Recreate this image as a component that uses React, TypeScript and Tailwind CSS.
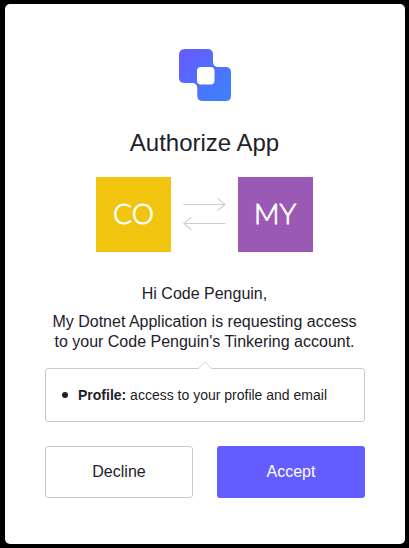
const avatar =
  "flex h-[75px] w-[75px] items-center justify-center pb-1 font-[Lato,sans-serif] text-[28px] font-light leading-none text-white [-webkit-text-stroke:0.8px_#fff]";

function Logo() {
  return (
    <svg className="h-[52px] w-[52px]" viewBox="0 0 52 52" aria-hidden="true">
      <defs>
        <linearGradient id="brand" x1="0" y1="0" x2="1" y2="1">
          <stop offset="0.1" stopColor="#635dff" />
          <stop offset="0.9" stopColor="#3f80ff" />
        </linearGradient>
      </defs>
      <path
        fill="url(#brand)"
        fillRule="evenodd"
        d="M6 0H28.500Q34 0 34 5.500V12.500Q34 18 39.500 18H46.500Q52 18 52 23.500V46.500Q52 52 46.500 52H24Q18.300 52 18.300 46.500V39.500Q18.300 34 13 34H5.500Q0 34 0 28.500V6Q0 0 6 0ZM22 18Q18 18 18 22V31.500Q18 35.500 22 35.500H31.500Q35.500 35.500 35.500 31.500V22Q35.500 18 31.500 18Z"
      />
    </svg>
  );
}

function Arrows() {
  return (
    <svg className="mb-0.5 h-[33px] w-[44px]" viewBox="0 0 44 33" fill="none" stroke="#cdced2" strokeWidth="1.1" aria-hidden="true">
      <path d="M0.300 7.500H42M34.500 1.300L42 7.500L34.500 13.700" />
      <path d="M42.500 26.500H0.800M8.300 20.300L0.800 26.500L8.300 32.700" />
    </svg>
  );
}

export default function App() {
  return (
    <main className="flex h-[548px] w-[409px] bg-black pt-1 pl-[5px] font-['Liberation_Sans',Arial,sans-serif] text-[#1e212a]">
      <section className="flex h-[540px] w-[400px] flex-col items-center rounded-[5px] bg-white px-10 pt-[45px]">
        <Logo />
        <h1 className="mt-[26px] mr-px text-2xl leading-8">Authorize App</h1>
        <div className="mt-[18px] ml-[51px] flex w-[217px] items-center justify-between self-start">
          <div className={`${avatar} bg-[#f1c40f]`}>CO</div>
          <Arrows />
          <div className={`${avatar} bg-[#9b59b6] pr-px`}>MY</div>
        </div>
        <p className="mt-8 mr-px text-base leading-5">Hi Code Penguin,</p>
        <p className="mt-2 mr-px text-center text-base leading-5">
          My Dotnet Application is requesting access
          <br />
          to your Code Penguin's Tinkering account.
        </p>
        <div className="relative mt-4 flex h-[54px] w-80 items-center rounded-[3px] border border-[#c9cace] pl-4">
          <svg className="absolute -top-2 left-[151px] h-[9px] w-4" viewBox="0 0 16 9" aria-hidden="true">
            <path d="M0 9L1 8L8 1L15 8L16 9Z" fill="#fff" />
            <path d="M1 8L8 1L15 8" fill="none" stroke="#d5d6d9" />
          </svg>
          <span className="mr-[10px] h-1.5 w-1.5 rounded-full bg-[#1e212a]" />
          <p className="text-sm leading-5">
            <b>Profile:</b> access to your profile and email
          </p>
        </div>
        <div className="mt-6 flex w-80 gap-6 text-base">
          <button className="h-[52px] w-[148px] rounded-[3px] border border-[#c9cace]">Decline</button>
          <button className="h-[52px] w-[148px] rounded-[3px] bg-[#635dff] text-white">Accept</button>
        </div>
      </section>
    </main>
  );
}
